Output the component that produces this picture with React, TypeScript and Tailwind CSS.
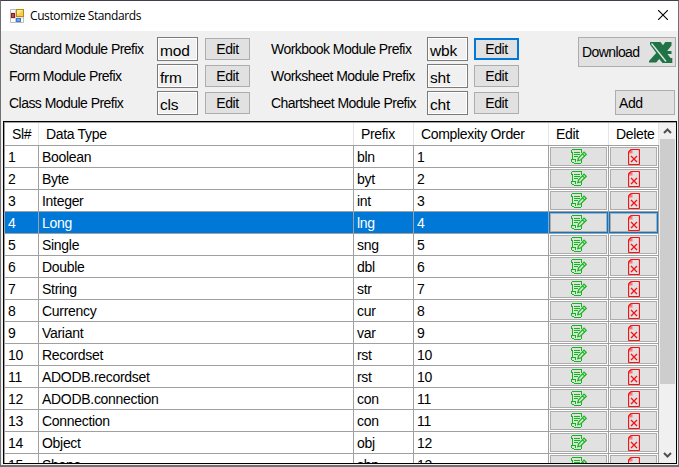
import React from "react";

type Row = [string, string, string, string];

const rows: Row[] = [
  ["1", "Boolean", "bln", "1"],
  ["2", "Byte", "byt", "2"],
  ["3", "Integer", "int", "3"],
  ["4", "Long", "lng", "4"],
  ["5", "Single", "sng", "5"],
  ["6", "Double", "dbl", "6"],
  ["7", "String", "str", "7"],
  ["8", "Currency", "cur", "8"],
  ["9", "Variant", "var", "9"],
  ["10", "Recordset", "rst", "10"],
  ["11", "ADODB.recordset", "rst", "10"],
  ["12", "ADODB.connection", "con", "11"],
  ["13", "Connection", "con", "11"],
  ["14", "Object", "obj", "12"],
  ["15", "Shape", "shp", "13"],
];

const columns = "grid-cols-[34px_315px_60px_135px_60px_50px]";

function EditIcon() {
  return (
    <svg width="16" height="15" viewBox="0 0 16 15" fill="none" stroke="#0fb818" strokeWidth="1">
      <g shapeRendering="crispEdges">
        <path d="M1 .5H11M.5 1V3M0 3.5H2M1.5 3V10M10.5 0V4" />
        <path d="M3 3.5H9M3 5.5H9M3 7.5H7" />
        <path d="M0 10.5H5M.5 10V13M1 13.5H3M4.5 11V13M3 14.5H10M10.5 10V14" />
      </g>
      <path d="M6.8 11.6 7.5 9 13 3.2 15.2 5.4 9.6 11ZM11.5 4.8 13.6 6.9" strokeWidth="1.2" />
    </svg>
  );
}

function DeleteIcon() {
  return (
    <svg width="12" height="16" viewBox="0 0 12 16" fill="none" stroke="#fa0f14" strokeWidth="1">
      <path d="M1 4.5V1H4.5V4.5Z" fill="#f77878" stroke="none" />
      <path d="M3 .5H10.5Q11.5.5 11.5 1.5V14.5Q11.5 15.5 10.5 15.5H1.5Q.5 15.5.5 14.5V3L3 .5" strokeWidth="1.2" />
      <path d="M3 7 9 13M9 7 3 13" strokeWidth="1.3" />
    </svg>
  );
}

function AppIcon() {
  return (
    <svg width="14" height="14" viewBox="0 0 14 14">
      <path d="M.5.5H13.5V13.5H.5Z" fill="#fff" stroke="#bcbcbc" />
      <path d="M5.5 1V13M1 4H5M1 9H13" stroke="#cfcfcf" />
      <rect x="6.5" y=".5" width="7" height="7" fill="#f8cf48" stroke="#b98a10" />
      <path d="M7 1H13L7 6Z" fill="#fce895" />
      <rect x="1.5" y="4.5" width="3" height="4" fill="#c9483a" stroke="#8e1c14" />
      <rect x="6.5" y="9.5" width="4" height="3" fill="#6fa8ef" stroke="#3f78c9" />
    </svg>
  );
}

function ExcelIcon() {
  return (
    <svg width="24" height="21" viewBox="0 0 24 21">
      <path d="M1 0H11.5L14 3.2 16.3 0H22.5V3.5L18.5 8.5V9H22.5V12H18.5L21.5 16H23.3V21H13.5L10.2 17 7.2 20.5H0V19L7.2 11 1 2.5Z" fill="#217346" />
      <path d="M2.5 1.5 17 19.5" stroke="#dcebe2" strokeWidth="1.3" />
    </svg>
  );
}

function PrefixRow({ label, value, wide, focused }: { label: string; value: string; wide?: boolean; focused?: boolean }) {
  return (
    <div className="flex h-6 items-center">
      <span className={`${wide ? "w-[156px]" : "w-[148px]"} shrink-0 text-[14px] leading-[18px] tracking-[-0.54px] whitespace-nowrap`}>{label}</span>
      <span className="flex h-6 w-[41px] shrink-0 items-center border border-[#7a7a7a] bg-[#f0f0f0] pt-[3px] pl-[2px] text-[15.5px] leading-[20px] tracking-[-0.2px] shadow-[inset_0_0_0_1px_white]">
        {value}
      </span>
      <button
        className={`${wide ? "ml-1.5" : "ml-[7px]"} flex h-[22px] w-[45px] shrink-0 items-center justify-center bg-[#e1e1e1] text-[14px] leading-[18px] tracking-[-0.4px] ${
          focused ? "border-2 border-[#0078d7]" : "border border-[#adadad]"
        }`}
      >
        Edit
      </button>
    </div>
  );
}

function GridRow({ row, selected }: { row: Row; selected: boolean }) {
  return (
    <div className={`grid h-[22px] shrink-0 ${columns} text-[14px] tracking-[-0.3px] ${selected ? "bg-[#0078d7] text-white" : "bg-white"}`}>
      {row.map((text, i) => (
        <div key={i} className="flex items-center border-r border-b border-[#a0a0a0] pt-px pl-[3px] leading-[18px] whitespace-nowrap">
          {text}
        </div>
      ))}
      {[0, 1].map((i) => (
        <div key={i} className={`border-r border-b border-[#a0a0a0] ${selected ? "bg-[#0078d7] p-px" : "bg-white p-px"}`}>
          <div className={`flex h-[19px] items-center justify-center border border-[#adadad] bg-[#e1e1e1] ${i === 1 ? "pl-px" : ""}`}>
            {i === 0 ? <EditIcon /> : <DeleteIcon />}
          </div>
        </div>
      ))}
    </div>
  );
}

export default function App() {
  return (
    <div className="flex h-[467px] w-[679px] flex-col overflow-hidden border border-b-2 border-[#707070] border-t-[#403f4b] bg-[#f0f0f0] font-['Liberation_Sans',Arial,sans-serif] text-black">
      <header className="flex h-[30px] shrink-0 items-center bg-white pr-[10px] pl-[9px]">
        <AppIcon />
        <h1 className="ml-[6px] font-['Open_Sans',sans-serif] text-[12px] tracking-[-0.4px]">Customize Standards</h1>
        <svg className="-mt-0.5 ml-auto" width="10" height="10" viewBox="0 0 10 10" stroke="#000" strokeWidth="1.1">
          <path d="M0 0 10 10M10 0 0 10" />
        </svg>
      </header>

      <section className="flex h-[90px] shrink-0 pt-[6px] pl-2">
        <div className="flex w-[262px] shrink-0 flex-col gap-[3px]">
          <PrefixRow label="Standard Module Prefix" value="mod" />
          <PrefixRow label="Form Module Prefix" value="frm" />
          <PrefixRow label="Class Module Prefix" value="cls" />
        </div>
        <div className="flex w-[307px] shrink-0 flex-col gap-[3px]">
          <PrefixRow label="Workbook Module Prefix" value="wbk" wide focused />
          <PrefixRow label="Worksheet Module Prefix" value="sht" wide />
          <PrefixRow label="Chartsheet Module Prefix" value="cht" wide />
        </div>
        <div className="flex w-[98px] shrink-0 flex-col items-end gap-[23px]">
          <button className="flex h-[30px] w-[98px] items-center justify-between border border-[#adadad] bg-[#e1e1e1] pr-[2px] pl-[3px] text-[14px] leading-[18px] tracking-[-0.6px]">
            Download
            <ExcelIcon />
          </button>
          <button className="mr-px flex h-[25px] w-[60px] items-center border border-[#adadad] bg-[#e1e1e1] pl-[3px] text-[14px] leading-[18px] tracking-[-0.4px]">
            Add
          </button>
        </div>
      </section>

      <main className="ml-[2px] flex h-[343px] w-[674px] shrink-0 overflow-hidden border border-black bg-white">
        <div className="flex w-[655px] shrink-0 flex-col overflow-hidden border-t border-l border-[#a0a0a0]">
          <div className={`grid h-[23px] shrink-0 ${columns} border-b border-[#a0a0a0] text-[14px] leading-[18px] tracking-[-0.33px]`}>
            {["Sl#", "Data Type", "Prefix", "Complexity Order", "Edit", "Delete"].map((title) => (
              <div key={title} className="flex items-center border-r border-[#e5e5e5] pb-px pl-[7px] whitespace-nowrap">
                {title}
              </div>
            ))}
          </div>
          {rows.map((row) => (
            <GridRow key={row[0]} row={row} selected={row[0] === "4"} />
          ))}
        </div>
        <div className="flex w-[17px] flex-col items-center border-t border-[#a0a0a0] bg-[#f0f0f0]">
          <div className="flex h-4 w-full shrink-0 items-center justify-center">
            <svg width="9" height="6" viewBox="0 0 9 6" fill="none" stroke="#505050" strokeWidth="2">
              <path d="M1 5 4.5 1.5 8 5" />
            </svg>
          </div>
          <div className="h-[218px] w-[15px] shrink-0 bg-[#cdcdcd]" />
          <div className="h-[27px] w-[15px] shrink-0 bg-[#cdcdcd]" />
          <div className="mt-auto flex h-[17px] items-center">
            <svg width="9" height="6" viewBox="0 0 9 6" fill="none" stroke="#505050" strokeWidth="2">
              <path d="M1 1 4.5 4.5 8 1" />
            </svg>
          </div>
        </div>
      </main>
    </div>
  );
}
